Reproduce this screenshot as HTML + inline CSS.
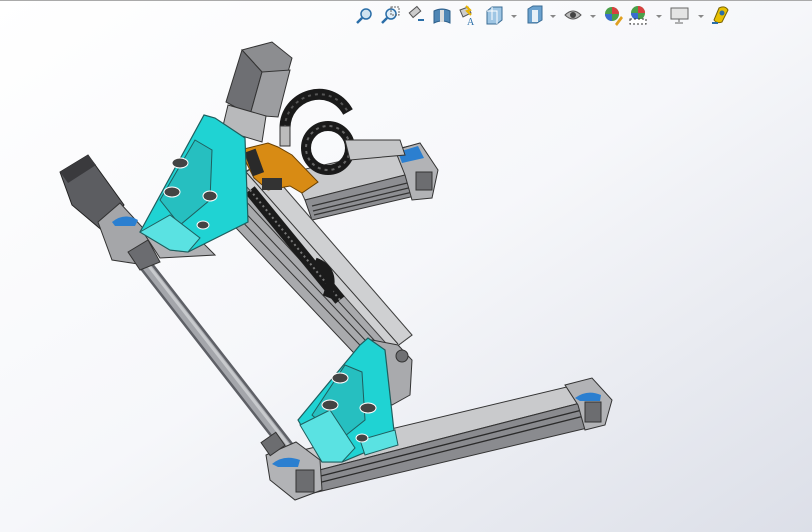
<!DOCTYPE html>
<html><head><meta charset="utf-8"><style>
html,body{margin:0;padding:0;width:812px;height:532px;overflow:hidden}
body{background:#f4f5f8}
svg{position:absolute;left:0;top:0}
</style></head><body>
<svg width="812" height="532" viewBox="0 0 812 532" xmlns="http://www.w3.org/2000/svg">
<defs>
<linearGradient id="bg" x1="0" y1="0" x2="1" y2="1"><stop offset="0" stop-color="#ffffff"/><stop offset="0.5" stop-color="#f6f7fa"/><stop offset="1" stop-color="#dcdfe8"/></linearGradient>
</defs>
<rect width="812" height="532" fill="url(#bg)"/>
<line x1="0" y1="0.5" x2="812" y2="0.5" stroke="#aaa"/>
<!-- toolbar -->
<g>
 <circle cx="366" cy="14" r="5" fill="#cfe3f0" stroke="#2a6ea8" stroke-width="1.5"/><line x1="362" y1="18" x2="357" y2="23" stroke="#2a6ea8" stroke-width="2.5"/>
 <circle cx="391" cy="14" r="5" fill="#e0eef8" stroke="#2a6ea8" stroke-width="1.5"/><line x1="387" y1="18" x2="382" y2="23" stroke="#2a6ea8" stroke-width="2.5"/><rect x="391" y="7" width="8" height="8" fill="none" stroke="#666" stroke-dasharray="2 1"/>
 <rect x="410" y="9" width="10" height="6" fill="#ccc" stroke="#555" transform="rotate(-40 415 12)"/><path d="M418 20 h6" stroke="#2a6ea8" stroke-width="2"/>
 <path d="M434 11 q8 -4 16 0 v12 q-8 -4 -16 0z" fill="#4f86b5" stroke="#2d5f8a"/><rect x="440" y="10" width="4" height="12" fill="#ddd"/>
 <path d="M460 10 l8 -3 l3 6 l-8 4z" fill="#ccc" stroke="#555"/><path d="M466 6 l4 4 l-3 1 l4 4" stroke="#e8b400" stroke-width="2" fill="none"/><text x="467" y="25" font-family="Liberation Serif,serif" font-size="10" fill="#2a6ea8">A</text>
 <path d="M487 11 l5 -4 h10 v13 l-5 4 h-10z" fill="#9fc6e4" stroke="#3a6c95"/><path d="M492 7 v13 M487 11 h10 v13" stroke="#fff" fill="none"/>
 <path d="M511 15 l3 3 l3 -3z" fill="#888"/>
 <path d="M528 9 l5 -3 h9 v14 l-5 3 h-9z" fill="#6ba2cf" stroke="#3a6c95"/><rect x="532" y="10" width="6" height="12" fill="#e8f1f8"/>
 <path d="M550 15 l3 3 l3 -3z" fill="#888"/>
 <path d="M565 15 q8 -8 16 0 q-8 8 -16 0z" fill="#bbb" stroke="#555"/><circle cx="573" cy="15" r="3" fill="#444"/>
 <path d="M590 15 l3 3 l3 -3z" fill="#888"/>
 <circle cx="612" cy="14" r="7" fill="#4aa04a"/><path d="M612 7 a7 7 0 0 1 7 7 h-7z" fill="#d84040"/><path d="M605 14 a7 7 0 0 0 7 7 v-7z" fill="#3a6cd0"/><path d="M615 24 l6 -8 l2 2 l-6 8z" fill="#e0a020"/>
 <circle cx="638" cy="13" r="7" fill="#4aa04a"/><path d="M638 6 a7 7 0 0 1 7 7 h-7z" fill="#d84040"/><path d="M631 13 a7 7 0 0 0 7 7 v-7z" fill="#3a6cd0"/><rect x="630" y="19" width="16" height="5" fill="#fff" stroke="#333" stroke-dasharray="2 2"/>
 <path d="M656 15 l3 3 l3 -3z" fill="#888"/>
 <rect x="671" y="8" width="17" height="11" fill="#e4e4e4" stroke="#666"/><path d="M679 19 v3 M675 23 h8" stroke="#666"/>
 <path d="M698 15 l3 3 l3 -3z" fill="#888"/>
 <path d="M714 20 l5 -12 q6 -3 9 2 l-6 12 q-5 2 -8 -2z" fill="#e8c000" stroke="#7a6400"/><circle cx="722" cy="13" r="2.5" fill="#2a6ea8"/><path d="M712 23 h6" stroke="#2a6ea8" stroke-width="2"/>
</g>
<!-- rod -->
<path d="M140 258 L288 448" stroke="#5e6066" stroke-width="14" stroke-linecap="round"/>
<path d="M140 258 L288 448" stroke="#a4a6ab" stroke-width="9"/>
<path d="M141 256 L289 446" stroke="#c8cacd" stroke-width="3"/>
<!-- right rail -->
<polygon points="292,172 410,146 425,170 305,200" fill="#c9cacc" stroke="#444" stroke-width="1"/>
<polygon points="305,200 425,170 432,192 312,220" fill="#8d8e92" stroke="#333"/>
<path d="M312 206 L428 178 M313 211 L429 183 M314 215 L430 188" stroke="#333" stroke-width="1.2"/>
<polygon points="395,150 420,143 438,170 432,198 412,200 405,175" fill="#b2b3b6" stroke="#333"/>
<polygon points="398,152 418,146 424,158 402,163" fill="#2b7fd0"/>
<rect x="416" y="172" width="16" height="18" fill="#6c6d70" stroke="#333"/>
<!-- drag chains -->
<path d="M285 128 C285 95 330 80 348 112" stroke="#1a1a1a" stroke-width="11" fill="none"/>
<path d="M285 128 C285 95 330 80 348 112" stroke="#555" stroke-width="2" stroke-dasharray="3 4" fill="none"/>
<circle cx="328" cy="148" r="22" stroke="#1a1a1a" stroke-width="10" fill="none"/>
<circle cx="328" cy="148" r="22" stroke="#666" stroke-width="2" stroke-dasharray="3 4" fill="none"/>
<rect x="280" y="126" width="10" height="20" fill="#bbb" stroke="#333"/>
<polygon points="345,140 400,140 405,155 350,160" fill="#c4c5c7" stroke="#333"/>
<!-- main diagonal beam -->
<polygon points="205,195 262,162 412,335 368,368" fill="#a9aaad" stroke="#333"/>
<polygon points="238,177 262,162 412,335 392,350" fill="#cfd0d2" stroke="#444"/>
<path d="M214 192 L376 362 M222 188 L382 358 M230 184 L387 354 M246 172 L398 344" stroke="#333" stroke-width="1"/>
<path d="M250 190 L340 300" stroke="#1b1b1b" stroke-width="12"/>
<path d="M250 190 L340 300" stroke="#777" stroke-width="2" stroke-dasharray="2 3"/>
<path d="M315 262 q22 8 12 35" stroke="#1b1b1b" stroke-width="9" fill="none"/>
<!-- top motor -->
<polygon points="242,50 272,42 292,58 288,72 262,72" fill="#8c8d90" stroke="#333"/>
<polygon points="242,50 262,72 250,115 226,102" fill="#6e6f73" stroke="#333"/>
<polygon points="262,72 290,70 278,117 250,115" fill="#9c9da0" stroke="#333"/>
<polygon points="228,105 266,116 262,142 222,130" fill="#b8b9bb" stroke="#333"/>
<!-- orange plate -->
<polygon points="240,150 268,143 278,147 292,155 318,182 302,193 290,186 268,190 254,178" fill="#d88b14" stroke="#6a4000"/>
<rect x="248" y="150" width="12" height="25" fill="#2a2a2a" transform="rotate(-20 254 162)"/>
<rect x="262" y="178" width="20" height="12" fill="#333"/>
<!-- left motor -->
<polygon points="60,172 88,155 124,205 104,232 72,205" fill="#5c5d61" stroke="#222"/>
<polygon points="60,172 88,155 96,165 68,183" fill="#3a3a3d"/>
<polygon points="98,222 120,203 154,240 138,264 112,260" fill="#a5a6a9" stroke="#333"/>
<path d="M112 222 q12 -10 26 -2 l-3 6 h-20z" fill="#2b7fd0"/>
<polygon points="128,252 148,240 160,262 140,270" fill="#6b6c70" stroke="#333"/>
<!-- left rail short piece -->
<polygon points="145,235 200,240 215,255 160,258" fill="#b0b1b4" stroke="#333"/>
<!-- top cyan bracket -->
<polygon points="140,232 204,115 215,118 245,138 248,222 188,252 170,250" fill="#1fd3d3" stroke="#1f5e5e" stroke-width="1.2"/>
<polygon points="160,200 195,140 212,150 210,200 180,225" fill="#26bfc0" stroke="#1f5e5e"/>
<polygon points="140,232 170,215 200,238 188,252 170,250" fill="#5ae2e2" stroke="#1f5e5e"/>
<ellipse cx="180" cy="163" rx="8" ry="5" fill="#444" stroke="#fff"/>
<ellipse cx="172" cy="192" rx="8" ry="5" fill="#444" stroke="#fff"/>
<ellipse cx="210" cy="196" rx="7" ry="5" fill="#444" stroke="#fff"/>
<ellipse cx="203" cy="225" rx="6" ry="4" fill="#444" stroke="#fff"/>
<!-- bottom bracket support block -->
<polygon points="372,340 398,345 412,360 410,395 392,405 375,390" fill="#a9aaad" stroke="#333"/>
<circle cx="402" cy="356" r="6" fill="#6f7073" stroke="#333"/>
<!-- bottom rail -->
<polygon points="282,455 575,385 592,400 300,475" fill="#c9cacc" stroke="#333"/>
<polygon points="300,475 592,400 600,425 305,495" fill="#8a8b8f" stroke="#333"/>
<path d="M305 480 L594 407 M306 486 L596 413" stroke="#2a2a2a" stroke-width="1.3"/>
<polygon points="266,455 296,442 320,460 322,490 295,500 270,480" fill="#b2b3b6" stroke="#333"/>
<path d="M272 464 q12 -10 28 -4 l-2 7 h-20z" fill="#2b7fd0"/>
<rect x="296" y="470" width="18" height="22" fill="#6c6d70" stroke="#333"/>
<polygon points="565,385 592,378 612,400 605,425 585,430 578,405" fill="#b2b3b6" stroke="#333"/>
<path d="M575 398 q12 -9 26 -3 l-1 6 h-20z" fill="#2b7fd0"/>
<rect x="585" y="402" width="16" height="20" fill="#6c6d70" stroke="#333"/>
<!-- bottom cyan bracket -->
<polygon points="298,420 360,345 368,338 385,350 395,440 342,462 322,462" fill="#1fd3d3" stroke="#1f5e5e" stroke-width="1.2"/>
<polygon points="312,415 345,365 362,372 365,420 340,440" fill="#26bfc0" stroke="#1f5e5e"/>
<polygon points="300,425 330,410 355,448 342,462 322,462" fill="#5ae2e2" stroke="#1f5e5e"/>
<polygon points="360,440 395,430 398,445 365,455" fill="#5ae2e2" stroke="#1f5e5e"/>
<ellipse cx="340" cy="378" rx="8" ry="5" fill="#444" stroke="#fff"/>
<ellipse cx="330" cy="405" rx="8" ry="5" fill="#444" stroke="#fff"/>
<ellipse cx="368" cy="408" rx="8" ry="5" fill="#444" stroke="#fff"/>
<ellipse cx="362" cy="438" rx="6" ry="4" fill="#444" stroke="#fff"/>
<!-- coupler near bottom -->
<rect x="264" y="436" width="18" height="16" fill="#6c6d70" stroke="#333" transform="rotate(-35 273 444)"/>
</svg>
</body></html>
